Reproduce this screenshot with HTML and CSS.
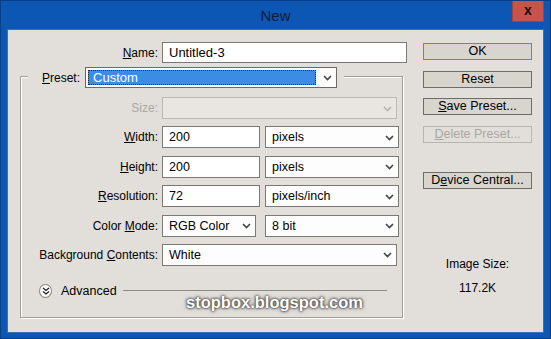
FILE: index.html
```html
<!doctype html>
<html lang="en">
<head>
  <meta charset="utf-8"/>
  <title>New</title>
  <link rel="stylesheet" href="styles.css">
</head>
<body>
<div class="window">
  <div class="titlebar">
    <span></span>
    <span class="title">New</span>
    <span class="close">x</span>
  </div>

  <div class="client">
    <div class="form">
      <div class="row name-row">
        <span class="lbl"><u>N</u>ame:</span>
        <div class="field wide">Untitled-3</div>
      </div>

      <div class="group">
        <div class="legend">
          <span class="lbl-inline"><u>P</u>reset:</span>
          <div class="select preset">
            <span class="sel-text"><span class="focus">Custom</span></span>
            <span class="arrow"><svg width="9" height="6" viewBox="0 0 9 6"><path d="M1 1l3.5 3.5L8 1" fill="none" stroke="#444" stroke-width="1.6"/></svg></span>
          </div>
        </div>

        <div class="rows">
          <div class="row">
            <span class="lbl disabled">Size:</span>
            <div class="select full off">
              <span class="sel-text"></span>
              <span class="arrow"><svg width="9" height="6" viewBox="0 0 9 6"><path d="M1 1l3.5 3.5L8 1" fill="none" stroke="#b5b2ae" stroke-width="1.6"/></svg></span>
            </div>
          </div>
          <div class="row">
            <span class="lbl"><u>W</u>idth:</span>
            <div class="field num">200</div>
            <div class="select unit">
              <span class="sel-text">pixels</span>
              <span class="arrow"><svg width="9" height="6" viewBox="0 0 9 6"><path d="M1 1l3.5 3.5L8 1" fill="none" stroke="#444" stroke-width="1.6"/></svg></span>
            </div>
          </div>
          <div class="row">
            <span class="lbl"><u>H</u>eight:</span>
            <div class="field num">200</div>
            <div class="select unit">
              <span class="sel-text">pixels</span>
              <span class="arrow"><svg width="9" height="6" viewBox="0 0 9 6"><path d="M1 1l3.5 3.5L8 1" fill="none" stroke="#444" stroke-width="1.6"/></svg></span>
            </div>
          </div>
          <div class="row">
            <span class="lbl"><u>R</u>esolution:</span>
            <div class="field num">72</div>
            <div class="select unit">
              <span class="sel-text">pixels/inch</span>
              <span class="arrow"><svg width="9" height="6" viewBox="0 0 9 6"><path d="M1 1l3.5 3.5L8 1" fill="none" stroke="#444" stroke-width="1.6"/></svg></span>
            </div>
          </div>
          <div class="row">
            <span class="lbl">Color <u>M</u>ode:</span>
            <div class="select mode">
              <span class="sel-text">RGB Color</span>
              <span class="arrow"><svg width="9" height="6" viewBox="0 0 9 6"><path d="M1 1l3.5 3.5L8 1" fill="none" stroke="#444" stroke-width="1.6"/></svg></span>
            </div>
            <div class="select unit">
              <span class="sel-text">8 bit</span>
              <span class="arrow"><svg width="9" height="6" viewBox="0 0 9 6"><path d="M1 1l3.5 3.5L8 1" fill="none" stroke="#444" stroke-width="1.6"/></svg></span>
            </div>
          </div>
          <div class="row">
            <span class="lbl">Background <u>C</u>ontents:</span>
            <div class="select full">
              <span class="sel-text">White</span>
              <span class="arrow"><svg width="9" height="6" viewBox="0 0 9 6"><path d="M1 1l3.5 3.5L8 1" fill="none" stroke="#444" stroke-width="1.6"/></svg></span>
            </div>
          </div>
        </div>

        <div class="advanced">
          <span class="adv-btn"><svg width="8" height="8" viewBox="0 0 8 8"><path d="M1 1l3 2.5L7 1M1 4.5l3 2.5 3-2.5" fill="none" stroke="#222" stroke-width="1.3"/></svg></span>
          <span class="adv-text">Advanced</span>
          <span class="adv-line"></span>
        </div>
      </div>
    </div>

    <div class="side">
      <div class="btn default">OK</div>
      <div class="btn gap11">Reset</div>
      <div class="btn gap10"><u>S</u>ave Preset...</div>
      <div class="btn gap11 disabled"><u>D</u>elete Preset...</div>
      <div class="btn gap29">D<u>e</u>vice Central...</div>
      <div class="size-info">
        <div>Image Size:</div>
        <div class="size-val">117.2K</div>
      </div>
    </div>

    <div class="watermark">stopbox.blogspot.com</div>
  </div>
</div>
</body>
</html>
```

FILE: styles.css
```css
:root{--face:#e2dfdb;--blue:#0c56b4;--edge:#7c7975}
*{box-sizing:border-box}
body{margin:0;font-family:'Liberation Sans',Arial,sans-serif;font-size:12px;color:#000}
u{text-decoration:underline;text-underline-offset:1px}

.window{width:551px;height:339px;background:var(--blue);border:1px solid #0a3f86;display:flex;flex-direction:column}
.titlebar{height:29px;display:grid;grid-template-columns:1fr auto 1fr;align-items:start}
.title{font-size:15px;color:#101c3c;margin-top:6px}
.close{justify-self:end;width:32px;height:21px;margin-right:6px;background:#c9524b;color:#111;font-weight:700;font-size:14px;text-align:center;line-height:19px;border:1px solid #a84038;border-top:none}

.client{position:relative;flex:1;margin:0 7px 6px 7px;background:var(--face);display:flex;padding:12px 0 0 12px;box-shadow:0 0 0 1px #3d6fb0}

.form{width:383px;flex-shrink:0}
.row{display:flex;align-items:center;height:22px}
.row > *{flex-shrink:0}
.lbl{width:141px;text-align:right;padding-right:4px;white-space:nowrap}
.name-row{height:21px}
.name-row .lbl{width:154px;margin-left:-12px}
.disabled{color:#aaa7a3}

.field{height:100%;background:#fff;border:1px solid var(--edge);padding:0 6px;display:flex;align-items:center;font-size:12.5px}
.field.wide{width:245px;font-size:13px}
.field.num{width:98px}

.select{height:100%;background:#fdfdfd;border:1px solid var(--edge);display:flex;align-items:center;font-size:12.5px}
.sel-text{flex:1;padding:0 6px;display:flex;align-items:center;height:100%}
.arrow{width:18px;display:flex;align-items:center;justify-content:center;padding-top:1px}
.select.full{width:235px}
.select.unit{width:134px;margin-left:5px}
.select.mode{width:94px;margin-right:4px}
.select.off{background:#e9e6e2;border-color:#bcb9b5}

.group{margin-top:13px;height:242px;border:1px solid #a19e9a;box-shadow:1px 1px 0 #fff,inset 1px 1px 0 #fff}
.legend{display:flex;align-items:center;height:21px;margin:-10px 0 0 7px;width:316px;background:var(--face);padding-left:14px}
.lbl-inline{margin-right:5px}
.select.preset{width:252px;height:21px;border-color:#6d6a66;flex-shrink:0}
.preset .sel-text{padding:2px}
.focus{display:flex;align-items:center;width:100%;height:100%;background:#3c8ce6;color:#fff;padding-left:4px;border:1px dotted #1b2a4a;font-size:13px}

.rows{display:flex;flex-direction:column;gap:7.4px;margin-top:9px}

.advanced{display:flex;align-items:center;margin-top:18px;padding:0 15px 0 18px}
.adv-btn{width:13px;height:14px;border-radius:50%;background:#fbfbfa;border:1px solid #8a8783;display:flex;align-items:center;justify-content:center}
.adv-text{margin-left:9px;font-size:12.5px}
.adv-line{flex:1;height:1px;background:#8e8b87;margin-left:6px}

.side{width:109px;margin-left:20px;padding-top:1px;flex-shrink:0}
.btn{height:17px;background:#d8d4ce;border:1px solid #6f6c68;text-align:center;line-height:15px;font-size:12.5px}
.btn.default{border-color:#5e86b6}
.btn.disabled{border-color:#b9b6b2;background:var(--face);color:#aaa7a3}
.gap10{margin-top:10px}
.gap11{margin-top:11px}
.gap29{margin-top:29px}
.size-info{margin-top:68px;text-align:center;font-size:12px}
.size-val{margin-top:10px}

.watermark{position:absolute;left:178px;top:263px;color:#fff;font-weight:700;font-size:16.5px;text-shadow:0 0 2px #333,0 0 3px #555,0 0 4px #777}
```
